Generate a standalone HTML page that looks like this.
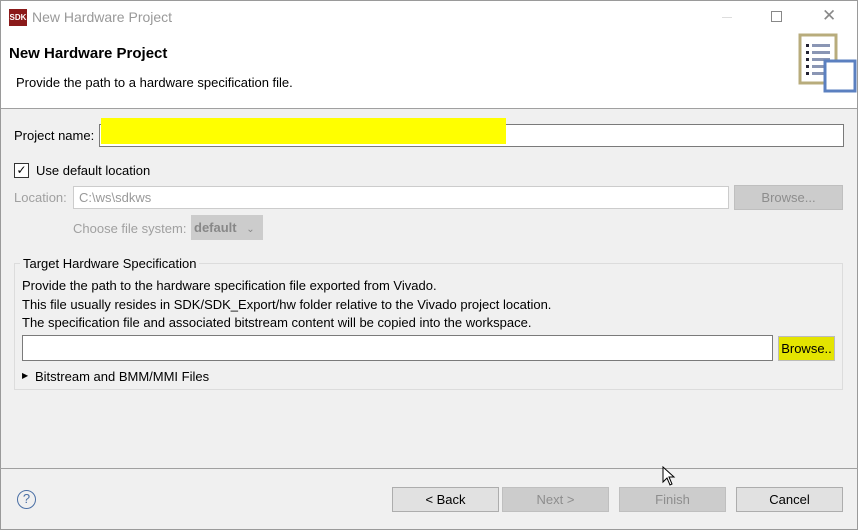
<!DOCTYPE html>
<html><head><style>
*{margin:0;padding:0;box-sizing:border-box}
body{width:858px;height:530px;overflow:hidden;background:#f0f0f0;font-family:"Liberation Sans",sans-serif;font-size:13px;color:#000;position:relative}
.a{position:absolute}
.win{left:0;top:0;width:858px;height:530px;border:1px solid #9a9a9a}
.btn{position:absolute;height:25px;border:1px solid #adadad;background:#e1e1e1;text-align:center;line-height:23px;font-size:13px}
.dis{background:#cccccc;border-color:#bfbfbf;color:#8d8d8d}
.inp{position:absolute;background:#fff;border:1px solid #7a7a7a;height:23px}
</style></head><body>
<div class="a" style="left:0;top:0;width:858px;height:108px;background:#fff"></div>
<div class="a" style="left:0;top:108px;width:858px;height:1px;background:#a0a0a0"></div>
<div class="a win"></div>
<div class="a" style="left:9px;top:9px;width:18px;height:17px;background:#8b1a1a;color:#fff;font-size:8px;font-weight:bold;line-height:17px;text-align:center">SDK</div>
<div class="a" style="left:32px;top:9px;color:#999;font-size:14px">New Hardware Project</div>
<div class="a" style="left:722px;top:17px;width:10px;height:1px;background:#ddd"></div>
<div class="a" style="left:771px;top:11px;width:11px;height:11px;border:1px solid #888"></div>
<div class="a" style="left:822px;top:6px;color:#888;font-size:17px">✕</div>
<div class="a" style="left:9px;top:45px;font-size:15px;font-weight:bold">New Hardware Project</div>
<div class="a" style="left:16px;top:75px">Provide the path to a hardware specification file.</div>
<svg class="a" style="left:798px;top:33px" width="60" height="60">
<rect x="2" y="2" width="36" height="48" fill="#fff" stroke="#b8ac7c" stroke-width="3"/>
<g fill="#223"><rect x="8" y="11" width="3" height="3"/><rect x="8" y="18" width="3" height="3"/><rect x="8" y="25" width="3" height="3"/><rect x="8" y="32" width="3" height="3"/><rect x="8" y="39" width="3" height="3"/></g>
<g fill="#8a96b4"><rect x="14" y="11" width="18" height="3"/><rect x="14" y="18" width="18" height="3"/><rect x="14" y="25" width="18" height="3"/><rect x="14" y="32" width="18" height="3"/><rect x="14" y="39" width="18" height="3"/></g>
<rect x="27" y="28" width="30" height="30" fill="#fff" stroke="#5b80c0" stroke-width="3"/>
</svg>
<div class="a" style="left:14px;top:128px">Project name:</div>
<div class="inp" style="left:99px;top:124px;width:745px;background:#fff"></div>
<div class="a" style="left:101px;top:118px;width:405px;height:26px;background:#ffff00"></div>
<div class="a" style="left:14px;top:163px;width:15px;height:15px;border:1px solid #333;background:#fff;font-size:12px;line-height:13px;text-align:center">✓</div>
<div class="a" style="left:36px;top:163px">Use default location</div>
<div class="a" style="left:14px;top:190px;color:#a0a0a0">Location:</div>
<div class="inp" style="left:73px;top:186px;width:656px;border-color:#ccc;color:#999;padding:3px 5px;font-size:13px">C:\ws\sdkws</div>
<div class="btn dis" style="left:734px;top:185px;width:109px;">Browse...</div>
<div class="a" style="left:73px;top:221px;color:#a0a0a0">Choose file system:</div>
<div class="a" style="left:191px;top:215px;width:72px;height:25px;background:#ccc;color:#888;padding:5px 3px;font-weight:bold;font-size:13px">default <span style="font-weight:normal;font-size:10px;margin-left:6px">⌄</span></div>
<div class="a" style="left:14px;top:263px;width:829px;height:127px;border:1px solid #dcdcdc"></div>
<div class="a" style="left:20px;top:256px;background:#f0f0f0;padding:0 3px">Target Hardware Specification</div>
<div class="a" style="left:22px;top:277px;line-height:18.5px">Provide the path to the hardware specification file exported from Vivado.<br>This file usually resides in SDK/SDK_Export/hw folder relative to the Vivado project location.<br>The specification file and associated bitstream content will be copied into the workspace.</div>
<div class="inp" style="left:22px;top:335px;width:751px;height:26px"></div>
<div class="btn" style="left:778px;top:336px;width:57px;background:#e4e400;border-color:#bbb;line-height:23px">Browse..</div>
<div class="a" style="left:22px;top:371px;font-size:8px">▶</div>
<div class="a" style="left:35px;top:369px">Bitstream and BMM/MMI Files</div>
<div class="a" style="left:0;top:468px;width:858px;height:1px;background:#a0a0a0"></div>
<div class="a" style="left:17px;top:490px;width:19px;height:19px;border:1.5px solid #4a6fa5;border-radius:50%;color:#4a6fa5;text-align:center;line-height:16px;font-size:13px">?</div>
<div class="btn" style="left:392px;top:487px;width:107px">&lt; Back</div>
<div class="btn dis" style="left:502px;top:487px;width:107px">Next &gt;</div>
<div class="btn dis" style="left:619px;top:487px;width:107px">Finish</div>
<div class="btn" style="left:736px;top:487px;width:107px">Cancel</div>
<svg class="a" style="left:662px;top:466px" width="16" height="22"><path d="M1 1 L1 16 L5 12 L8 19 L10 18 L7 11 L12 11 Z" fill="#fff" stroke="#000" stroke-width="1"/></svg>
</body></html>
